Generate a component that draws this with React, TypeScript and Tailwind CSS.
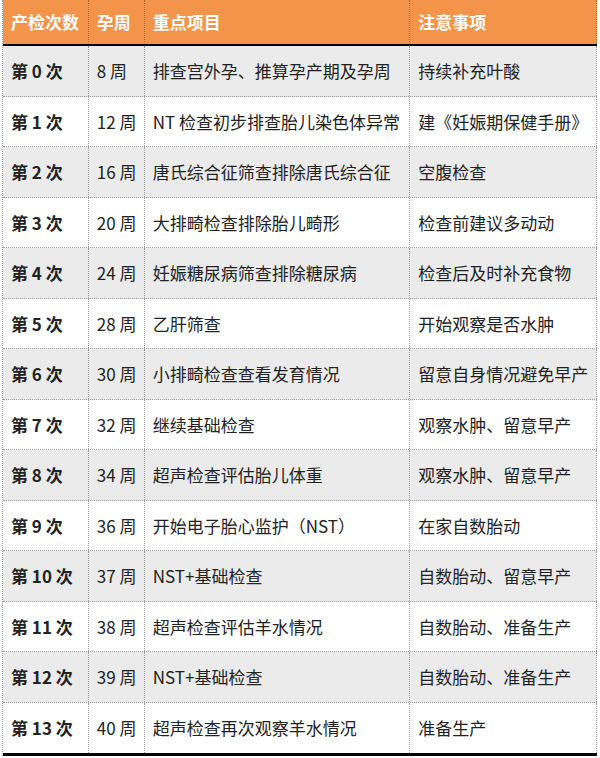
const rows = [
  ["第 0 次", "8 周", "排查宫外孕、推算孕产期及孕周", "持续补充叶酸"],
  ["第 1 次", "12 周", "NT 检查初步排查胎儿染色体异常", "建《妊娠期保健手册》"],
  ["第 2 次", "16 周", "唐氏综合征筛查排除唐氏综合征", "空腹检查"],
  ["第 3 次", "20 周", "大排畸检查排除胎儿畸形", "检查前建议多动动"],
  ["第 4 次", "24 周", "妊娠糖尿病筛查排除糖尿病", "检查后及时补充食物"],
  ["第 5 次", "28 周", "乙肝筛查", "开始观察是否水肿"],
  ["第 6 次", "30 周", "小排畸检查查看发育情况", "留意自身情况避免早产"],
  ["第 7 次", "32 周", "继续基础检查", "观察水肿、留意早产"],
  ["第 8 次", "34 周", "超声检查评估胎儿体重", "观察水肿、留意早产"],
  ["第 9 次", "36 周", "开始电子胎心监护（NST）", "在家自数胎动"],
  ["第 10 次", "37 周", "NST+基础检查", "自数胎动、留意早产"],
  ["第 11 次", "38 周", "超声检查评估羊水情况", "自数胎动、准备生产"],
  ["第 12 次", "39 周", "NST+基础检查", "自数胎动、准备生产"],
  ["第 13 次", "40 周", "超声检查再次观察羊水情况", "准备生产"],
];

const widths = ["w-[86px]", "w-[56px]", "w-[266px]", "w-[187px]"];

export default function App() {
  return (
    <div
      className="w-[600px] h-[758px] bg-white pl-[2px] text-[17px] text-[#222]"
      style={{ fontFamily: '"Microsoft YaHei", "Noto Sans CJK SC", sans-serif' }}
    >
      <div className="w-[595px] border-l border-dotted border-[#9a9a9a]">
        <div className="flex h-[46px] bg-[#f4934a] border-b-2 border-black text-white font-bold">
          {["产检次数", "孕周", "重点项目", "注意事项"].map((h, i) => (
            <div
              key={h}
              className={`${widths[i]} flex items-center pl-[8px] border-r border-dotted border-[#b06a35]`}
            >
              {h}
            </div>
          ))}
        </div>
        {rows.map((r, idx) => (
          <div
            key={idx}
            className={`flex h-[50.5px] ${idx % 2 === 0 ? "bg-[#ebebeb]" : "bg-white"} ${
              idx === rows.length - 1 ? "border-b-[3px] border-solid border-black h-[53.5px]" : "border-b border-dotted border-[#9a9a9a]"
            }`}
          >
            {r.map((c, i) => (
              <div
                key={i}
                className={`${widths[i]} flex items-center pl-[8px] border-r border-dotted border-[#9a9a9a] ${
                  i === 0 ? "font-bold" : ""
                }`}
              >
                {c}
              </div>
            ))}
          </div>
        ))}
      </div>
    </div>
  );
}
